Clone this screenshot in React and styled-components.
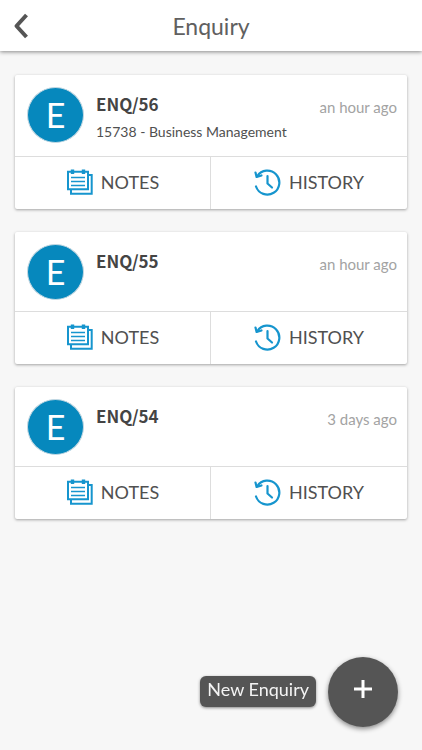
import React from 'react';
import styled, { createGlobalStyle } from 'styled-components';

const GlobalStyle = createGlobalStyle`
  * {
    box-sizing: border-box;
  }

  body {
    margin: 0;
    background-color: #f7f7f7;
    color: #444444;
    font-family: Lato, 'Liberation Sans', sans-serif;
  }

  button {
    margin: 0;
    border: 0;
    padding: 0;
    background: none;
    color: inherit;
    font-family: inherit;
    cursor: pointer;
  }
`;

const Page = styled.div`
  min-height: 100vh;
`;

const Header = styled.header`
  display: grid;
  grid-template-columns: 48px 1fr 48px;
  align-items: center;
  height: 51px;
  background-color: #ffffff;
  box-shadow: 0 1px 4px rgba(0, 0, 0, 0.45);
`;

const BackButton = styled.button`
  display: flex;
  align-items: center;
  height: 48px;
  padding-left: 13px;
`;

const Title = styled.h1`
  margin: 0;
  color: #606060;
  font-size: 23px;
  font-weight: 400;
  line-height: 28px;
  text-align: center;
`;

const List = styled.main`
  display: flex;
  flex-direction: column;
  gap: 23px;
  padding: 24px 15px 100px;
`;

const Card = styled.article`
  border-radius: 2px;
  background-color: #ffffff;
  box-shadow: 0 1px 3px rgba(0, 0, 0, 0.35);
`;

const CardHead = styled.div`
  display: flex;
  gap: 12px;
  padding: 12px 10px 11px 12px;
`;

const Avatar = styled.div`
  display: flex;
  flex-shrink: 0;
  align-items: center;
  justify-content: center;
  width: 57px;
  height: 56px;
  border: 1px solid #c4d8e2;
  border-radius: 50%;
  background-color: #0688bd;
  color: #ffffff;
  font-size: 34px;
  line-height: 40px;
`;

const Details = styled.div`
  flex: 1;
  min-width: 0;
  padding: 5px 0 3px;
`;

const TitleRow = styled.div`
  display: flex;
  justify-content: space-between;
  align-items: flex-start;
`;

const EnquiryCode = styled.h2`
  margin: 0;
  font-family: 'Noto Sans CJK JP', 'Noto Sans', sans-serif;
  font-size: 17px;
  font-weight: 700;
  line-height: 24px;
`;

const Time = styled.time`
  padding-top: 5px;
  color: #a3a3a3;
  font-size: 15px;
  line-height: 20px;
`;

const Course = styled.p`
  margin: 5px 0 0;
  color: #505050;
  font-size: 14px;
  line-height: 20px;
`;

const Actions = styled.div`
  display: grid;
  grid-template-columns: 1fr 1fr;
  height: 53px;
  border-top: 1px solid #dddddd;
`;

const ActionButton = styled.button`
  display: flex;
  align-items: center;
  justify-content: center;
  gap: 8px;
  padding-bottom: 2px;
  color: #505050;
  font-size: 18px;
  line-height: 24px;

  &:first-child {
    border-right: 1px solid #dddddd;
  }
`;

const Floating = styled.div`
  position: fixed;
  right: 24px;
  bottom: 23px;
  display: flex;
  align-items: center;
  gap: 12px;
`;

const FabLabel = styled.label`
  margin-bottom: 2px;
  padding: 1px 7px 6px;
  border-radius: 6px;
  background-color: #555555;
  box-shadow: 0 1px 3px rgba(0, 0, 0, 0.45);
  color: #f4f4f4;
  font-size: 18px;
  line-height: 24px;
  cursor: pointer;
`;

const Fab = styled.button`
  display: flex;
  align-items: center;
  justify-content: center;
  width: 70px;
  height: 70px;
  padding-bottom: 6px;
  border-radius: 50%;
  background-color: #555555;
  box-shadow: 0 2px 5px rgba(0, 0, 0, 0.45);
`;

const BackIcon = () => (
  <svg width="16" height="26" viewBox="0 0 16 26" fill="none" stroke="#555555" strokeWidth="4" aria-hidden="true">
    <path d="M13.5 2 L3.5 13 L13.5 24" strokeLinejoin="round" />
  </svg>
);

const NotesIcon = () => (
  <svg width="27" height="26" viewBox="0 0 27 26" fill="none" stroke="#1695ce" aria-hidden="true">
    <path d="M2 2.7 H22 V20.3 H2 Z" strokeWidth="2" />
    <path d="M5 20.5 V24.7 H25.7 V6 H22.5" strokeWidth="2" />
    <path d="M5 8.5 H19 M5 12.5 H19 M5 16.5 H19" strokeWidth="1.4" />
    <path d="M6.5 0.5 V5 M17.5 0.5 V5" strokeWidth="3.4" />
  </svg>
);

const HistoryIcon = () => (
  <svg
    width="27"
    height="27"
    viewBox="0 0 27 27"
    fill="none"
    stroke="#1695ce"
    strokeWidth="2.2"
    strokeLinecap="round"
    strokeLinejoin="round"
    aria-hidden="true"
  >
    <path d="M3.3 7 A12 12 0 1 1 2 17.5" />
    <path d="M1.5 3.5 L2.6 8 L7.5 6.5" />
    <path d="M13.5 7 V14.5 L18 18.5" />
  </svg>
);

const PlusIcon = () => (
  <svg width="18" height="18" viewBox="0 0 18 18" stroke="#ffffff" strokeWidth="3" aria-hidden="true">
    <path d="M9 0 V18 M0 9 H18" />
  </svg>
);

const enquiries = [
  { code: 'ENQ/56', time: 'an hour ago', course: '15738 - Business Management' },
  { code: 'ENQ/55', time: 'an hour ago' },
  { code: 'ENQ/54', time: '3 days ago' },
];

const EnquiryCard = ({ enquiry }) => (
  <Card>
    <CardHead>
      <Avatar>E</Avatar>
      <Details>
        <TitleRow>
          <EnquiryCode>{enquiry.code}</EnquiryCode>
          <Time>{enquiry.time}</Time>
        </TitleRow>
        {enquiry.course && <Course>{enquiry.course}</Course>}
      </Details>
    </CardHead>
    <Actions>
      <ActionButton type="button">
        <NotesIcon />
        NOTES
      </ActionButton>
      <ActionButton type="button">
        <HistoryIcon />
        HISTORY
      </ActionButton>
    </Actions>
  </Card>
);

const App = () => (
  <>
    <GlobalStyle />
    <Page>
      <Header>
        <BackButton type="button" aria-label="Back">
          <BackIcon />
        </BackButton>
        <Title>Enquiry</Title>
      </Header>
      <List>
        {enquiries.map((enquiry) => (
          <EnquiryCard key={enquiry.code} enquiry={enquiry} />
        ))}
      </List>
      <Floating>
        <FabLabel htmlFor="new-enquiry">New Enquiry</FabLabel>
        <Fab id="new-enquiry" type="button">
          <PlusIcon />
        </Fab>
      </Floating>
    </Page>
  </>
);

export default App;
